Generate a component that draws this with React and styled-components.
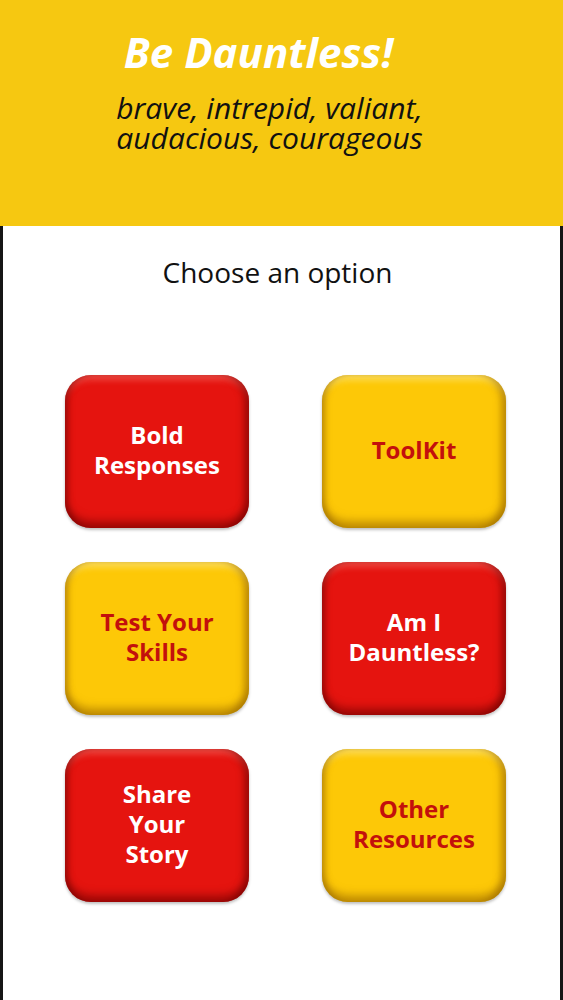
import styled, { createGlobalStyle } from "styled-components";

const GlobalStyle = createGlobalStyle`
  html, body {
    margin: 0;
    padding: 0;
    background: #ffffff;
  }
  body {
    font-family: "Open Sans", "Liberation Sans", sans-serif;
  }
`;

const Page = styled.div`
  width: 563px;
  min-height: 1000px;
  display: flex;
  flex-direction: column;
  background: #ffffff;
`;

const Header = styled.header`
  height: 226px;
  background: #f6c811;
  display: flex;
  flex-direction: column;
  align-items: center;
  padding: 26px 24px 0 0;
  box-sizing: border-box;
`;

const Title = styled.h1`
  margin: 0 22px 0 0;
  font-family: "Open Sans", sans-serif;
  font-style: italic;
  font-weight: 700;
  font-size: 42px;
  line-height: 52px;
  color: #ffffff;
`;

const Subtitle = styled.p`
  margin: 15px 0 0 0;
  font-family: "Open Sans", sans-serif;
  font-style: italic;
  font-size: 30px;
  line-height: 30px;
  color: #111111;
  text-align: center;
`;

const Body = styled.main`
  flex: 1;
  border-left: 3px solid #151515;
  border-right: 3px solid #151515;
  display: flex;
  flex-direction: column;
  align-items: center;
`;

const Prompt = styled.h2`
  margin: 26px 8px 0 0;
  font-family: "Open Sans", sans-serif;
  font-weight: 400;
  font-size: 28px;
  line-height: 40px;
  color: #111111;
`;

const Grid = styled.div`
  margin-top: 83px;
  align-self: stretch;
  padding-left: 62px;
  display: grid;
  grid-template-columns: 184px 184px;
  grid-auto-rows: 153px;
  column-gap: 73px;
  row-gap: 34px;
`;

const palette = {
  red: {
    bg: "#e5140f",
    text: "#ffffff",
    dark: "rgba(110, 0, 0, 0.55)",
    light: "rgba(255, 140, 130, 0.45)",
  },
  yellow: {
    bg: "#fdc807",
    text: "#c3100c",
    dark: "rgba(150, 100, 0, 0.55)",
    light: "rgba(255, 240, 150, 0.6)",
  },
};

const OptionButton = styled.button`
  border: none;
  border-radius: 26px;
  background: ${({ $tone }) => palette[$tone].bg};
  color: ${({ $tone }) => palette[$tone].text};
  box-shadow:
    inset 0 -9px 8px -2px ${({ $tone }) => palette[$tone].dark},
    inset -8px 0 7px -3px ${({ $tone }) => palette[$tone].dark},
    inset 6px 0 6px -3px ${({ $tone }) => palette[$tone].dark},
    inset 0 8px 6px -3px ${({ $tone }) => palette[$tone].light},
    0 2px 3px rgba(0, 0, 0, 0.25);
  font-family: "Open Sans", sans-serif;
  font-weight: 700;
  font-size: 24px;
  line-height: 30px;
  text-align: center;
  display: flex;
  align-items: center;
  justify-content: center;
  padding: 0 10px 4px;
  cursor: pointer;
`;

const options = [
  { label: ["Bold", "Responses"], tone: "red" },
  { label: ["ToolKit"], tone: "yellow" },
  { label: ["Test Your", "Skills"], tone: "yellow" },
  { label: ["Am I", "Dauntless?"], tone: "red" },
  { label: ["Share", "Your", "Story"], tone: "red" },
  { label: ["Other", "Resources"], tone: "yellow" },
];

export default function App() {
  return (
    <Page>
      <GlobalStyle />
      <Header>
        <Title>Be Dauntless!</Title>
        <Subtitle>
          brave, intrepid, valiant,
          <br />
          audacious, courageous
        </Subtitle>
      </Header>
      <Body>
        <Prompt>Choose an option</Prompt>
        <Grid>
          {options.map((opt) => (
            <OptionButton key={opt.label.join(" ")} $tone={opt.tone}>
              <span>
                {opt.label.map((line, i) => (
                  <span key={line}>
                    {i > 0 && <br />}
                    {line}
                  </span>
                ))}
              </span>
            </OptionButton>
          ))}
        </Grid>
      </Body>
    </Page>
  );
}
